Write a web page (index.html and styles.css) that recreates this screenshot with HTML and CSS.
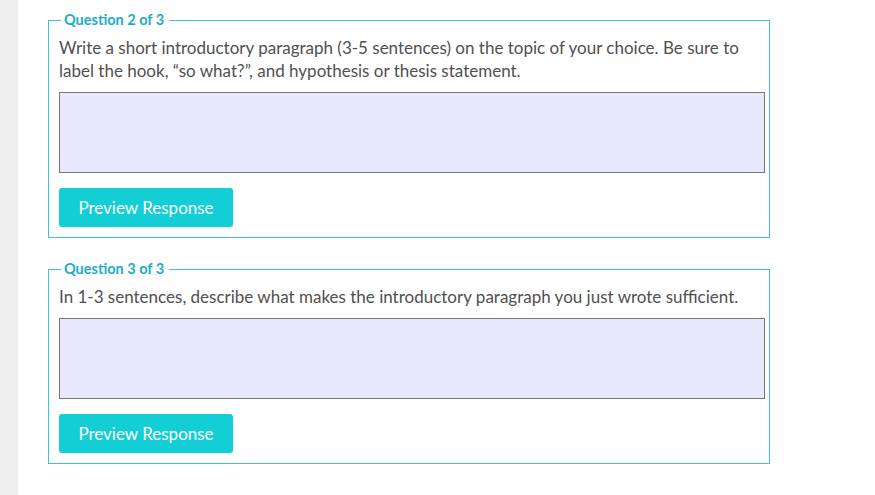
FILE: index.html
```html
<!DOCTYPE html>
<html lang="en">

<head>
  <meta charset="UTF-8">
  <title>Questions</title>
  <link rel="stylesheet" href="styles.css">
</head>

<body>
  <div class="side-strip"></div>

  <main class="questions">
    <fieldset class="question">
      <legend class="question-legend">Question 2 of 3</legend>
      <p class="question-text">Write a short introductory paragraph (3-5 sentences) on the topic of your choice. Be sure to label the hook, “so what?”, and hypothesis or thesis statement.</p>
      <textarea class="question-answer"></textarea>
      <button class="preview-btn">Preview Response</button>
    </fieldset>

    <fieldset class="question">
      <legend class="question-legend">Question 3 of 3</legend>
      <p class="question-text">In 1-3 sentences, describe what makes the introductory paragraph you just wrote sufficient.</p>
      <textarea class="question-answer"></textarea>
      <button class="preview-btn">Preview Response</button>
    </fieldset>
  </main>
</body>

</html>
```

FILE: styles.css
```css
* {
  margin: 0;
  padding: 0;
  box-sizing: border-box;
}

body {
  font-family: Lato, "Liberation Sans", sans-serif;
  background: #ffffff;
  display: flex;
  min-height: 495px;
}

.side-strip {
  width: 18px;
  flex: 0 0 18px;
  background: #eeeeee;
}

.questions {
  padding: 11px 0 0 30px;
  display: flex;
  flex-direction: column;
  gap: 22px;
}

.question {
  width: 722px;
  border: 1px solid #3ec2dc;
  padding: 0 4px 10px 10px;
}

.question-legend {
  margin-left: 2px;
  padding: 0 5px 0 3px;
  font-size: 14.5px;
  line-height: 18px;
  font-weight: bold;
  color: #1eaccd;
}

.question-text {
  margin: 7px 0 10px;
  font-size: 17px;
  line-height: 23px;
  color: #505050;
}

.question-answer {
  display: block;
  width: 100%;
  height: 81px;
  border: 1px solid #777777;
  background: #e8e8fc;
  resize: none;
}

.preview-btn {
  all: unset;
  display: block;
  margin-top: 15px;
  width: 174px;
  height: 39px;
  text-align: center;
  font-family: Lato, "Liberation Sans", sans-serif;
  font-size: 17px;
  line-height: 39px;
  color: #ffffff;
  background: #14ced6;
  border-radius: 3px;
}
```
